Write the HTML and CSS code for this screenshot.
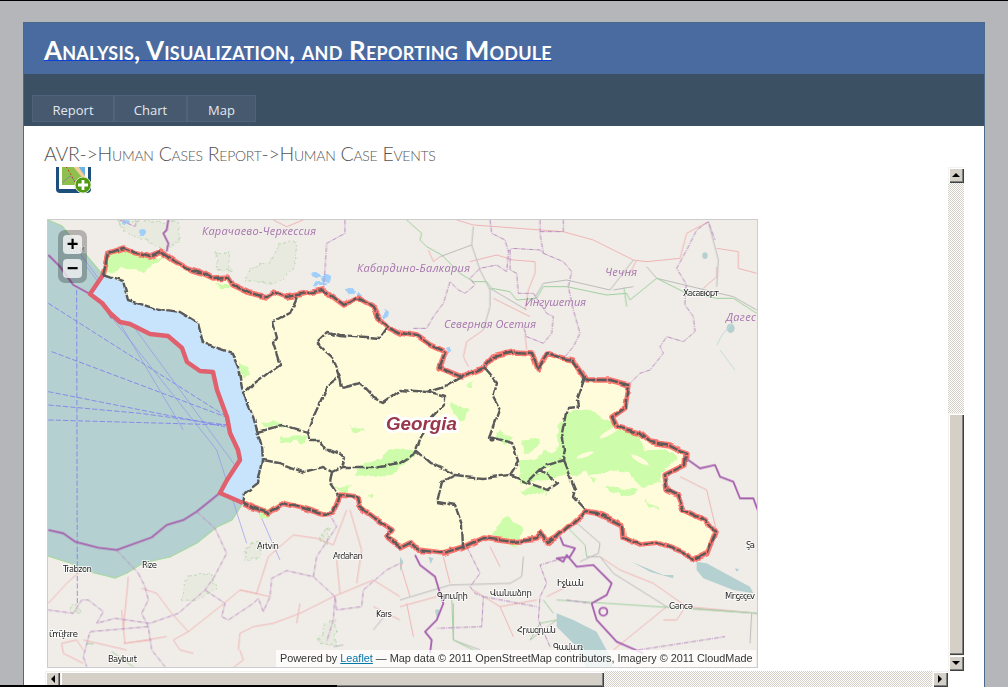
FILE: index.html

```html
<!DOCTYPE html>
<html>
  <head>
    <meta charset="utf-8">
    <title>Analysis, Visualization, and Reporting Module</title>
    <link rel="stylesheet" href="styles.css">
  </head>
  <body>
    <div class="panel">
      <div class="header"><a class="title" href="#">Analysis, Visualization, and Reporting Module</a></div>
      <div class="nav">
        <a class="tab tab-report">Report</a>
        <a class="tab tab-chart">Chart</a>
        <a class="tab tab-map">Map</a>
      </div>
      <div class="crumb">AVR-&gt;Human Cases Report-&gt;Human Case Events</div>
      <div class="scroller">
        <div class="pane">
          <div class="icon-clip">
            <svg class="add-icon" width="35" height="35" viewBox="0 0 35 35">
              <rect x="0" y="0" width="35" height="34" rx="4" fill="#1d4f7c"/>
              <rect x="3" y="0" width="29" height="30" fill="#fff"/>
              <rect x="6" y="0" width="23" height="26" fill="#8fbf4c"/>
              <path d="M16 0H29V18Z" fill="#6db4e4"/>
              <path d="M11 0H17L29 17V22Z" fill="#f0cf9c"/>
              <path d="M8 4L14 14L19 23" stroke="#c0392b" stroke-width="1" stroke-dasharray="2 2" fill="none"/>
              <path d="M6 24L14 17L22 25" stroke="#8a8a8a" stroke-width="1" fill="none"/>
              <circle cx="27" cy="26" r="8" fill="#4f9a10" stroke="#d8e8c0" stroke-width="1"/>
              <path d="M27 21V31M22 26H32" stroke="#fff" stroke-width="2.8"/>
            </svg>
          </div>
          <div class="map">
            <svg class="tiles" width="709" height="447" viewBox="48 220 709 447">
              <defs>
                <filter id="rough" x="-5%" y="-5%" width="110%" height="110%">
                  <feTurbulence type="fractalNoise" baseFrequency="0.07" numOctaves="2" seed="4"/>
                  <feDisplacementMap in="SourceGraphic" scale="5" xChannelSelector="R" yChannelSelector="G"/>
                </filter>
                <filter id="blob" x="-5%" y="-5%" width="110%" height="110%">
                  <feTurbulence type="fractalNoise" baseFrequency="0.1" numOctaves="3" seed="9"/>
                  <feDisplacementMap in="SourceGraphic" scale="8" xChannelSelector="R" yChannelSelector="G"/>
                </filter>
              </defs>

              <rect x="48" y="220" width="709" height="447" fill="#f0ede8"/>

              <!-- sea -->
              <path class="sea" d="M48 220L62 226L82 250L103 275L90 294L102 303L110 313L120 322L130 324L150 334L168 336L182 348L187 362L200 371L213 372L217 390L227 417L230 433L238 450L240 460L227 480L220 493L243 503L232 520L217 527L197 543L170 557L143 563L127 573L115 578L107 576L90 572L70 563L48 556Z"/>
              <path class="coast" d="M48 220L62 226L82 250L103 275M243 503L232 520L217 527L197 543L170 557L143 563L127 573L115 578L107 576L90 572L70 563L48 556"/>

              <!-- parks -->
              <g class="parks" filter="url(#blob)">
                <path d="M117 220L177 222L180 240L165 250L140 238L125 232Z"/>
                <path d="M278 243L295 240L297 262L285 280L268 283L245 281L250 268L268 264L275 255Z"/>
                <path d="M217 255L228 252L230 270L220 272Z"/>
                <path d="M187 575L210 572L216 590L195 600L182 602Z"/>
                <path d="M250 543L262 540L258 558L243 562Z"/>
                <path d="M325 622L336 620L335 645L318 642Z"/>
                <path d="M325 530L330 528L326 545L320 540Z"/>
                <path d="M72 605L78 605L80 612L70 612Z"/>
              </g>

              <!-- lakes and small water -->
              <g class="lake-blue" filter="url(#blob)">
                <ellipse cx="316" cy="275" rx="5" ry="3"/>
                <ellipse cx="326" cy="278" rx="5" ry="4"/>
                <ellipse cx="320" cy="284" rx="5" ry="2"/>
                <ellipse cx="350" cy="291" rx="5" ry="3"/>
                <ellipse cx="358" cy="295" rx="3" ry="2"/>
                <ellipse cx="125" cy="222" rx="4" ry="2"/>
                <ellipse cx="142" cy="232" rx="3" ry="3"/>
                <ellipse cx="385" cy="315" rx="3" ry="4"/>
                <ellipse cx="449" cy="350" rx="3" ry="3"/>
              </g>
              <g transform="translate(400 450) scale(.3333)" class="lake">
                <path d="M470 490L520 510L590 545L625 610L640 655L560 655L530 590L470 530Z"/>
                <path d="M890 335L920 340L1050 410L1060 430L1000 420L910 385L890 360Z"/>
                <path d="M695 335L790 375L820 375L820 385L750 365Z"/>
                <path d="M1005 355L1018 358L1010 365Z"/>
                <path d="M85 320L100 325L92 342Z"/>
                <path d="M105 480L118 478L112 510Z"/>
                <path d="M0 320L10 335L0 365Z"/>
              </g>
              <g transform="translate(400 210) scale(.3333)" class="lake">
                <ellipse cx="915" cy="137" rx="8" ry="10"/>
                <ellipse cx="992" cy="355" rx="12" ry="14"/>
              </g>
              <path class="creek" d="M717 345L722 335L735 320M720 350L735 370"/>

              <!-- blue sea routes -->
              <g transform="translate(40 210) scale(.3333)" class="routes">
                <path d="M110 240L112 1180M25 280L560 620M35 425L555 620M25 545L555 650M25 585L300 610L560 645M25 630L560 645"/>
                <path class="solid" d="M120 130L610 800L720 1050M190 290L530 720L620 1000M240 340L430 660M140 170L200 250"/>
              </g>

              <!-- georgia fills -->
              <path class="shelf" d="M103 275L90 294L102 303L110 313L120 322L130 324L150 334L168 336L182 348L187 362L200 371L213 372L217 390L227 417L230 433L238 450L240 460L227 480L220 493L243 503L245 493L258 483L263 460L262 447L252 413L243 393L238 367L232 353L203 343L198 323L180 312L153 308L128 300L123 282Z"/>
              <path class="land" d="M103 275L108 253L123 248L133 252L150 257L162 252L173 260L187 268L200 272L213 278L228 277L233 285L250 293L267 297L273 292L287 297L298 295L323 290L343 305L357 298L373 307L378 317L390 328L400 333L417 336L430 345L445 352L440 368L462 377L483 368L493 357L515 352L532 353L538 370L547 353L562 358L573 360L587 380L610 380L628 385L625 408L612 417L617 427L640 433L650 442L670 445L686 453L685 465L665 475L667 490L677 495L683 510L705 520L715 532L707 553L693 560L683 552L660 543L640 545L623 537L622 525L597 513L585 511L570 525L557 537L547 543L540 532L538 539L513 542L483 538L463 547L443 553L418 550L410 542L400 547L387 537L393 530L373 517L360 507L358 497L340 495L333 513L325 515L303 508L282 503L268 513L253 508L243 503L245 493L258 483L263 460L262 447L252 413L243 393L238 367L232 353L203 343L198 323L180 312L153 308L128 300L123 282Z"/>

              <!-- forest -->
              <g class="forest" filter="url(#blob)">
                <path d="M108 256L123 250L150 258L165 258L152 266L138 272L122 266L110 274L104 272Z"/>
                <path d="M218 284L232 284L228 289L220 289Z"/>
                <path d="M239 362L247 364L250 376L243 378Z"/>
                <path d="M260 421L285 424L284 427L262 427Z"/>
                <path d="M280 437L306 436L306 441L280 443Z"/>
                <path d="M335 487L350 485L345 495Z"/>
                <path d="M258 513L272 508L268 520L260 518Z"/>
                <g transform="translate(340 380) scale(.3333)">
                  <path d="M115 240L150 205L220 210L230 225L150 285L50 290L45 270Z"/>
                  <path d="M340 80L390 90L360 125L345 100Z"/>
                  <path d="M30 140L80 150L40 160Z"/>
                  <path d="M480 150L520 175L490 195L470 165Z"/>
                  <path d="M545 180L600 175L580 215L550 215Z"/>
                  <path d="M540 250L650 210L655 130L700 85L780 110L780 270L660 290L620 300L540 310Z"/>
                  <path d="M85 345L105 345L100 358Z"/>
                </g>
                <g transform="translate(400 450) scale(.3333)">
                  <path d="M360 30L420 40L400 60L365 60Z"/>
                  <path d="M430 0L490 30L460 60L420 50Z"/>
                  <path d="M530 0L800 0L830 30L780 70L780 100L720 110L690 70L620 60L580 90L540 50Z"/>
                  <path d="M600 110L720 120L700 135L640 125Z"/>
                  <path d="M730 150L785 180L750 175Z"/>
                  <path d="M270 250L320 195L370 240L350 290L300 270Z"/>
                  <path d="M360 120L410 105L440 130L380 135Z"/>
                </g>
                <g transform="translate(400 210) scale(.3333)">
                  <path d="M150 580L210 595L180 625L160 610Z"/>
                  <path d="M205 520L220 520L215 535Z"/>
                  <path d="M490 620L560 595L640 640L720 680L730 720L470 720Z"/>
                </g>
              </g>
              <g class="holes">
                <ellipse cx="610" cy="432" rx="12" ry="2.5" transform="rotate(-30 610 432)"/>
                <ellipse cx="640" cy="460" rx="10" ry="2.5" transform="rotate(30 640 460)"/>
                <ellipse cx="585" cy="455" rx="9" ry="2" transform="rotate(-20 585 455)"/>
                <ellipse cx="600" cy="476" rx="11" ry="2"/>
                <ellipse cx="545" cy="470" rx="7" ry="1.5" transform="rotate(-25 545 470)"/>
              </g>

              <!-- thin map lines, north -->
              <g transform="translate(400 210) scale(.3333)" fill="none">
                <path class="road" d="M170 30L220 45L490 65L580 90L700 150L740 155L840 145L860 70L925 35M100 155L120 140M210 155L290 135L340 150L405 155L405 190L385 240L375 300M280 265L390 320M375 370L380 420M190 440L200 395L250 360M205 470L190 440M950 115L1015 125L1015 175L1070 190M950 170L950 200L910 235M85 120L100 155M710 150L690 190"/>
                <path class="grey" d="M120 140L215 105L220 50M215 105L240 180L270 240L270 290L250 360M270 235L380 300M400 270L430 220L500 210L630 240L700 150M640 240L700 230M770 205L1000 260L1070 300M740 170L770 205M925 35L955 150L950 230"/>
                <path class="green" d="M20 30L65 70L60 90L80 110L125 135L180 190L220 215L260 215L275 235L330 245L350 270L410 265L430 230L500 230L620 255L680 250L690 270L770 205L850 245L950 265L1000 265L1070 310M672 232L680 290"/>
                <path class="border" d="M40 355L80 355L100 320L130 280L150 215L175 240L195 250L225 225L210 205L240 175L290 165L320 185L325 125L335 115L420 120L430 130L490 155L515 185L505 230L520 300L540 370L520 410L495 440M330 120L330 180L350 190L355 250L385 250L400 250L440 310L460 320L455 370L430 400L380 380L370 350M270 30L275 70L315 90L325 125M420 30L420 70L430 130M420 65L490 65L490 30M685 525L720 490L750 480L790 430L780 410L800 380L850 395L885 365L880 320L855 285L855 240L860 225L830 175L860 120L890 60L925 35L945 90"/>
              </g>
              <g transform="translate(40 210) scale(.3333)" fill="none">
                <path class="road" d="M700 30L740 50L790 30"/>
                <path class="border" d="M915 30L915 70L860 100L855 180L850 240M240 30L285 50L290 30"/>
                <path class="thick" d="M385 30L380 60L370 70L385 100L380 125"/>
                <path class="thick" d="M25 135L60 170L100 225L150 252"/>
                <path class="thick" d="M150 252L190 280L215 325"/>
              </g>
              <!-- thin map lines, south -->
              <g transform="translate(40 450) scale(.3333)" fill="none">
                <path class="road" d="M25 460L80 400L130 355M250 540L265 380M305 415L350 430L395 490L445 545L400 570L420 600L460 610M445 545L540 470L600 420L650 430L685 320L760 255L830 265L880 285L920 180M595 600L600 550L640 530L700 520L780 490L880 440L1000 390L1080 440M600 600L610 630L570 660M65 580L110 570L130 600M65 580L70 610L130 640M245 480L255 580L380 560M335 570L250 580M930 180L965 300L950 400M770 520L780 460M890 330L900 430M1080 510L1000 470M130 570L260 600M600 420L690 440"/>
                <path class="grey" d="M1000 540L1040 490M880 590L910 585"/>
                <path class="green" d="M140 580L160 582M215 605L280 650"/>
                <path class="border" d="M230 300L295 370M470 185L525 235L560 310L520 385L495 420L415 490L330 520L225 505L170 520L190 485L145 450L125 450L100 490L25 480M295 370L315 410L325 450L305 490L325 530L335 600L375 650M325 530L150 545L130 620L140 650M495 420L555 460L545 500L565 510L640 460L655 445L670 485L690 440L695 385L740 362L820 380L885 440L890 480L965 470L970 420L1040 360L1080 340M820 380L830 320L890 230L870 195M885 440L880 510L860 575"/>
                <path class="thick" d="M538 130L470 185L430 210L380 225L335 262L230 300L175 293L105 275L70 250L25 240"/>
              </g>
              <g transform="translate(400 450) scale(.3333)" fill="none">
                <path class="road" d="M840 80L920 120L950 245M600 320L660 360L760 400L860 470L1073 490M790 510L830 510L850 480M130 320L150 400M270 290L300 350M0 470L110 440M440 440L520 400M300 470L340 560M20 460L40 560M640 600L800 470M0 340L30 440M220 420L300 470L410 450"/>
                <path class="grey" d="M520 210L600 280L595 310L540 335M370 320L365 380L330 400L150 405L0 450M1073 490L800 470L640 370L600 320L560 320M160 460L160 570L240 600M470 510L390 570M1055 490L1050 580"/>
                <path class="green" d="M500 230L555 285L560 320M430 450L460 490M155 440L160 570L240 610M390 570L420 520L470 510M470 450L1073 490"/>
                <path class="border" d="M200 290L240 370L210 410L225 430L250 440L245 530L110 535M470 330L420 345L440 400L420 440L415 510L450 590M250 440L410 470M500 450L570 460M715 600L975 560"/>
                <path class="thick" d="M45 315L60 345L105 380L120 430L130 460L110 510L75 545L95 570L90 610"/>
                <path class="thick" d="M480 260L490 285L525 295L510 320L470 325L490 335L500 315L530 350L580 345L635 400L620 435L575 460L590 510L650 575L730 610"/>
                <circle class="thick" cx="610" cy="485" r="12"/>
                <path class="thick" d="M858 25L900 55L945 45L960 80L1000 95L1020 145L1060 145L1073 180"/>
              </g>

              <!-- georgia borders -->
              <path class="outline-sea" d="M103 275L90 294L102 303L110 313L120 322L130 324L150 334L168 336L182 348L187 362L200 371L213 372L217 390L227 417L230 433L238 450L240 460L227 480L220 493L243 503"/>
              <g filter="url(#rough)" fill="none">
                <path class="outline-red" d="M103 275L108 253L123 248L133 252L150 257L162 252L173 260L187 268L200 272L213 278L228 277L233 285L250 293L267 297L273 292L287 297L298 295L323 290L343 305L357 298L373 307L378 317L390 328L400 333L417 336L430 345L445 352L440 368L462 377L483 368L493 357L515 352L532 353L538 370L547 353L562 358L573 360L587 380L610 380L628 385L625 408L612 417L617 427L640 433L650 442L670 445L686 453L685 465L665 475L667 490L677 495L683 510L705 520L715 532L707 553L693 560L683 552L660 543L640 545L623 537L622 525L597 513L585 511L570 525L557 537L547 543L540 532L538 539L513 542L483 538L463 547L443 553L418 550L410 542L400 547L387 537L393 530L373 517L360 507L358 497L340 495L333 513L325 515L303 508L282 503L268 513L253 508L243 503"/>
                <path class="outline-dark" d="M103 275L108 253L123 248L133 252L150 257L162 252L173 260L187 268L200 272L213 278L228 277L233 285L250 293L267 297L273 292L287 297L298 295L323 290L343 305L357 298L373 307L378 317L390 328L400 333L417 336L430 345L445 352L440 368L462 377L483 368L493 357L515 352L532 353L538 370L547 353L562 358L573 360L587 380L610 380L628 385L625 408L612 417L617 427L640 433L650 442L670 445L686 453L685 465L665 475L667 490L677 495L683 510L705 520L715 532L707 553L693 560L683 552L660 543L640 545L623 537L622 525L597 513L585 511L570 525L557 537L547 543L540 532L538 539L513 542L483 538L463 547L443 553L418 550L410 542L400 547L387 537L393 530L373 517L360 507L358 497L340 495L333 513L325 515L303 508L282 503L268 513L253 508L243 503"/>
                <path class="inner" d="M103 275L123 282L128 300L153 308L180 312L198 323L203 343L232 353L238 367L243 393L252 413L262 447L263 460L258 483L245 493L243 503"/>
                <path class="inner" d="M297 297L290 313L273 322L277 337L273 343L280 365L253 385L243 395"/>
                <path class="inner" d="M257 432L283 425L307 432L312 420L327 387L340 377L333 358L317 343L328 332L340 335L380 338L387 328"/>
                <path class="inner" d="M340 377L342 388L360 383L373 397L383 402L400 390L428 392L445 387L462 377"/>
                <path class="inner" d="M428 392L445 397L445 403L432 417L420 437L415 450L417 452L430 463L455 475L483 478L510 475L528 483L548 490L558 483L540 470L528 482"/>
                <path class="inner" d="M485 368L497 382L493 397L500 410L490 437L512 443L515 450L518 462L510 475"/>
                <path class="inner" d="M585 377L577 400L578 407L567 408L562 433L565 450L563 460L547 465L540 470M563 460L567 470L575 490L573 497L585 510"/>
                <path class="inner" d="M455 475L442 482L437 502L455 505L462 525L463 547"/>
                <path class="inner" d="M263 460L280 463L303 472L323 467L332 472L342 467L345 457L330 450L327 450L320 440L310 440L307 432M342 467L373 467L400 463L417 452M332 472L330 483L338 495"/>
              </g>
              <circle cx="492" cy="439" r="2.6" fill="#555"/>

              <!-- labels -->
              <g class="region">
                <text x="202" y="235" textLength="114">Карачаево-Черкессия</text>
                <text x="357" y="272" textLength="113">Кабардино-Балкария</text>
                <text x="605" y="276" textLength="32">Чечня</text>
                <text x="525" y="306" textLength="61">Ингушетия</text>
                <text x="444" y="328" textLength="92">Северная Осетия</text>
                <text x="726" y="321" textLength="30">Дагес</text>
              </g>
              <g class="place">
                <text x="683" y="296" textLength="36">Хасавюрт</text>
                <text x="257" y="549" textLength="22">Artvin</text>
                <text x="333" y="559" textLength="30">Ardahan</text>
                <text x="376" y="617" textLength="16">Kars</text>
                <text x="63" y="572" textLength="29">Trabzon</text>
                <text x="142" y="568" textLength="15">Rize</text>
                <text x="49" y="637" textLength="29">ümüşhane</text>
                <text x="108" y="662" textLength="29">Bayburt</text>
                <text x="437" y="599" textLength="31">Գյումրի</text>
                <text x="490" y="596" textLength="42">Վանաձոր</text>
                <text x="557" y="586" textLength="27">Իջևան</text>
                <text x="517" y="633" textLength="39">Հրազդան</text>
                <text x="553" y="650" textLength="30">Գավառ</text>
                <text x="669" y="609" textLength="24">Gəncə</text>
                <text x="725" y="599" textLength="30">Mingəçev</text>
                <text x="746" y="548" textLength="9">Şa</text>
                <text class="faint" x="68" y="252" textLength="17">Сочи</text>
              </g>
              <text class="country" x="386" y="430">Georgia</text>
            </svg>
            <div class="zoom">
              <a class="zoom-btn">+</a>
              <a class="zoom-btn">−</a>
            </div>
            <div class="attrib">Powered by <a href="#">Leaflet</a> — Map data © 2011 OpenStreetMap contributors, Imagery © 2011 CloudMade</div>
          </div>
        </div>
        <div class="vbar">
          <div class="sb-btn"><i class="arrow up"></i></div>
          <div class="sb-track"></div>
          <div class="sb-thumb vthumb"></div>
          <div class="sb-btn"><i class="arrow down"></i></div>
        </div>
        <div class="hbar">
          <div class="sb-btn"><i class="arrow left"></i></div>
          <div class="sb-thumb hthumb"></div>
          <div class="sb-track"></div>
          <div class="sb-btn"><i class="arrow right"></i></div>
        </div>
      </div>
    </div>
    <div class="edge"></div>
  </body>
</html>
```

FILE: styles.css

```css
* {
  margin:0;
  padding:0;
  box-sizing:border-box;
}
html, body {
  height:687px;
  overflow:hidden;
}
body {
  position:relative;
  background:#b5b6ba;
  border-top:1px solid #000;
  font-family:"Open Sans", sans-serif;
}
.edge {
  position:absolute;
  left:0;
  bottom:0;
  width:337px;
  height:2px;
  background:#000;
}

.panel {
  width:962px;
  height:700px;
  margin:21px 0 0 23px;
  border:1px solid #4b6a8b;
  background:#fff;
}
.header {
  height:51px;
  padding:13px 0 0 20px;
  background:#4a6b9f;
}
.title {
  display:inline-block;
  height:25px;
  font-family:"Lato", sans-serif;
  font-variant:small-caps;
  font-weight:700;
  font-size:26px;
  letter-spacing:.22px;
  line-height:28px;
  color:#fff;
  text-decoration:none;
  border-bottom:1px solid #0b3fd8;
}
.nav {
  display:flex;
  height:52px;
  padding:21px 0 0 8px;
  background:#3c5064;
}
.tab {
  height:27px;
  line-height:28px;
  text-align:center;
  font-size:13px;
  color:#e4e8ee;
  background:#46596f;
  border:1px solid #4e647c;
}
.tab-report { width:82px; }
.tab-chart { width:73px; }
.tab-map { width:69px; }

.crumb {
  height:41px;
  padding:15px 0 0 20px;
  font-family:"Lato", sans-serif;
  font-weight:300;
  font-variant:small-caps;
  font-size:19.5px;
  letter-spacing:-.27px;
  line-height:26px;
  color:#555;
}

.scroller {
  display:grid;
  grid-template-columns:903px 16px;
  grid-template-rows:504px 16px;
  margin-left:21px;
}
.pane {
  overflow:hidden;
}
.icon-clip {
  height:27px;
  margin-left:11px;
  overflow:hidden;
}
.add-icon {
  display:block;
  margin-top:-8px;
}

.map {
  position:relative;
  width:711px;
  height:449px;
  margin:25px 0 0 2px;
  border:1px solid #ccc;
}
.tiles {
  display:block;
}
.sea { fill:#b5d0d0; }
.coast { fill:none; stroke:#a8d8a0; stroke-width:1.2; }
.shelf { fill:#c8e4fc; }
.land { fill:#fffcdc; }
.forest path { fill:#cdfcaa; }
.holes ellipse { fill:#fffcdc; }
.parks path { fill:#e9eadf; stroke:#c4dabc; stroke-width:1.2; stroke-dasharray:3 2; }
.lake path, .lake ellipse { fill:#b5d0d0; }
.lake-blue ellipse { fill:#a0d0fa; }
.creek { fill:none; stroke:#c4dcdc; stroke-width:1; }
.routes { fill:none; stroke:#7a7af0; stroke-width:2.4; stroke-dasharray:16 6; }
.routes .solid { stroke:#8c8cf0; stroke-dasharray:none; stroke-width:1.8; }
.road { stroke:#efb4b4; stroke-width:3; stroke-linejoin:round; }
.grey { stroke:#bbb; stroke-width:3; }
.green { stroke:#9ed09e; stroke-width:3; }
.border { stroke:#b98cc0; stroke-width:3; stroke-dasharray:14 3 3 3; stroke-linejoin:round; }
.thick { fill:none; stroke:#a65fae; stroke-width:5.5; stroke-linejoin:round; }
.outline-sea { fill:none; stroke:#e0606e; stroke-width:4.5; stroke-linejoin:round; }
.outline-red { stroke:#fb5f5a; stroke-opacity:.85; stroke-width:5.5; stroke-linejoin:round; }
.outline-dark { stroke:#5a5a5a; stroke-width:2.4; stroke-dasharray:10 1.5; stroke-linejoin:round; }
.inner { stroke:#5a5a5a; stroke-width:2.4; stroke-dasharray:10 1.5; stroke-linejoin:round; }

.region text {
  font-family:"Open Sans", sans-serif;
  font-style:italic;
  font-size:11px;
  fill:#a574ae;
}
.place text {
  font-family:"DejaVu Sans", sans-serif;
  font-size:8.5px;
  fill:#222;
  stroke:#fff;
  stroke-width:2px;
  stroke-opacity:.7;
  paint-order:stroke;
}
.place .faint {
  fill:#999;
}
.country {
  font-family:"Liberation Sans", sans-serif;
  font-weight:700;
  font-style:italic;
  font-size:18.8px;
  fill:#98364a;
  stroke:#fff;
  stroke-width:6px;
  stroke-linejoin:round;
  paint-order:stroke;
}

.zoom {
  position:absolute;
  left:10px;
  top:10px;
  display:flex;
  flex-direction:column;
  gap:5px;
  padding:5px;
  background:rgba(0,0,0,.25);
  border-radius:7px;
}
.zoom-btn {
  display:block;
  width:19px;
  height:19px;
  line-height:18px;
  text-align:center;
  font-family:"Liberation Sans", sans-serif;
  font-weight:700;
  font-size:20px;
  color:#000;
  background:rgba(255,255,255,.75);
  border-radius:4px;
}
.attrib {
  position:absolute;
  right:1px;
  bottom:0;
  width:480px;
  height:17px;
  padding-left:4px;
  line-height:17px;
  white-space:nowrap;
  font-family:"Liberation Sans", sans-serif;
  font-size:10.85px;
  color:#333;
  background:rgba(255,255,255,.78);
}
.attrib a {
  color:#0078a8;
}

.vbar {
  display:flex;
  flex-direction:column;
}
.hbar {
  display:flex;
}
.sb-btn, .sb-thumb {
  flex:none;
  background:#d4d0c8;
  box-shadow:inset 1px 1px 0 #f4f2ee, inset 2px 2px 0 #fff, inset -1px -1px 0 #404040, inset -2px -2px 0 #808080;
}
.sb-btn {
  display:flex;
  align-items:center;
  justify-content:center;
  width:16px;
  height:16px;
}
.sb-track {
  flex:1;
  background:repeating-conic-gradient(#d4d0c8 0 25%, #fff 0 50%) 0 0/2px 2px;
}
.vthumb {
  width:16px;
  height:242px;
}
.hthumb {
  width:544px;
  height:16px;
}
.hbar .sb-btn:first-child {
  width:15px;
}
.arrow {
  display:block;
  width:0;
  height:0;
  border-style:solid;
  border-color:transparent;
}
.arrow.up { border-width:0 4px 4px; border-bottom-color:#000; }
.arrow.down { border-width:4px 4px 0; border-top-color:#000; }
.arrow.left { border-width:4px 4px 4px 0; border-right-color:#000; }
.arrow.right { border-width:4px 0 4px 4px; border-left-color:#000; }
```
